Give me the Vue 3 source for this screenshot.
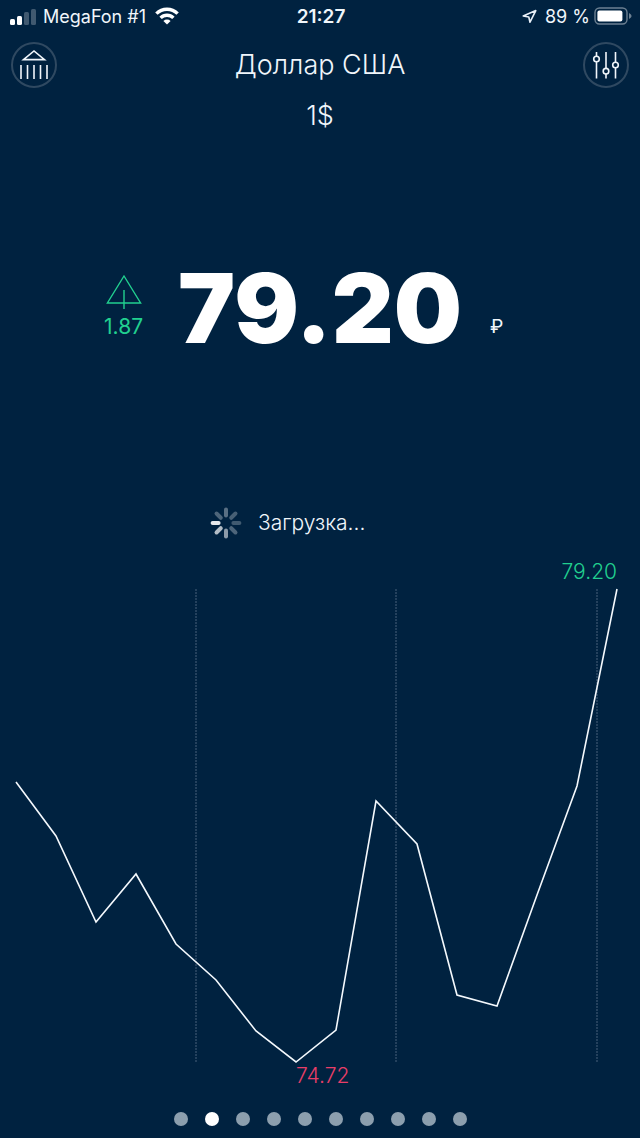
<script setup>
import { ref, computed } from 'vue'

const rate = '79.20'
const change = '1.87'

const pages = 10
const activePage = ref(1)

// Chart values in plot units, one point per day
const points = [
  [16, 227], [56, 281], [96, 367], [136, 319],
  [176, 389], [216, 425], [256, 476], [296, 507],
  [336, 475], [376, 246], [417, 289], [457, 440],
  [497, 451], [537, 340], [577, 231], [617, 34]
]
const gridLines = [196, 396, 597]

const linePoints = computed(() => points.map((p) => p.join(',')).join(' '))

// Spinner spokes, clockwise from the top
const spokes = [0.35, 0.28, 0.25, 0.3, 0.55, 0.7, 0.9, 0.3]
</script>

<template>
  <div class="app">
    <div class="status-bar">
      <div class="status-left">
        <svg class="signal" width="27" height="18" viewBox="0 0 27 18" fill="#fff">
          <rect x="0" y="12" width="5" height="6" rx="1.5" />
          <rect x="7" y="9" width="5" height="9" rx="1.5" />
          <rect x="14" y="5" width="5" height="13" rx="1.5" opacity="0.25" />
          <rect x="21" y="2" width="5" height="16" rx="1.5" opacity="0.25" />
        </svg>
        <span class="carrier">MegaFon #1</span>
        <svg class="wifi" width="24" height="18" viewBox="0 0 24 18" fill="none" stroke="#fff" stroke-width="3.4">
          <path d="M1.4 6.6 A15 15 0 0 1 22.6 6.6" />
          <path d="M5.6 10.9 A9 9 0 0 1 18.4 10.9" />
          <path d="M12 17.6 L8.4 14 A5.2 5.2 0 0 1 15.6 14 Z" fill="#fff" stroke="none" />
        </svg>
      </div>
      <div class="status-time">21:27</div>
      <div class="status-right">
        <svg width="15" height="15" viewBox="0 0 15 15" fill="none" stroke="#e8f0f8" stroke-width="1.6" stroke-linejoin="round">
          <path d="M13.8 1.6 L1.2 7 L6.8 8 L8 13.2 Z" />
        </svg>
        <span class="percent">89 %</span>
        <svg width="38" height="18" viewBox="0 0 38 18">
          <rect x="1" y="1" width="32" height="16" rx="4.5" fill="none" stroke="#6c8092" stroke-width="1.4" />
          <rect x="3.4" y="3.4" width="25" height="11.2" rx="2" fill="#fff" />
          <path d="M35 6 Q37.6 7.4 37.6 9 Q37.6 10.6 35 12 Z" fill="#6c8092" />
        </svg>
      </div>
    </div>

    <header class="header">
      <button class="round-btn" type="button" aria-label="Банк">
        <svg width="30" height="32" viewBox="0 0 30 32" fill="none" stroke="#f0f6fb" stroke-width="1.6">
          <path d="M4.5 10.6 L15 2 L25.5 10.6 Z" />
          <path d="M2 16 V30 M8.5 16 V30 M15 16 V30 M21.5 16 V30 M28 16 V30" />
        </svg>
      </button>
      <h1 class="title">Доллар США</h1>
      <button class="round-btn" type="button" aria-label="Настройки">
        <svg width="28" height="28" viewBox="0 0 28 28" fill="none" stroke="#f0f6fb" stroke-width="1.6">
          <path d="M4.5 1 V5.2 M4.5 10.8 V27.5 M14 1 V17.4 M14 23 V27.5 M23.5 1 V11.2 M23.5 16.8 V27.5" />
          <circle cx="4.5" cy="8" r="2.8" />
          <circle cx="14" cy="20.2" r="2.8" />
          <circle cx="23.5" cy="14" r="2.8" />
        </svg>
      </button>
    </header>
    <p class="unit">1$</p>

    <main class="content">
      <section class="rate">
        <div class="trend">
          <svg width="36" height="36" viewBox="0 0 36 36" fill="none" stroke="#21d08f" stroke-width="1.4">
            <path d="M18 2 L34.6 29 H1.4 Z M18 16 V35" />
          </svg>
          <span>{{ change }}</span>
        </div>
        <div class="value">{{ rate }}</div>
        <div class="currency">₽</div>
      </section>

      <div class="loading" role="status">
        <svg width="32" height="32" viewBox="0 0 32 32" stroke="#fff" stroke-width="4" stroke-linecap="round">
          <line
            v-for="(o, i) in spokes"
            :key="i"
            x1="16"
            y1="2.6"
            x2="16"
            y2="8.6"
            :opacity="o"
            :transform="`rotate(${i * 45} 16 16)`"
          />
        </svg>
        <span>Загрузка...</span>
      </div>

      <svg class="chart" viewBox="0 0 640 534">
        <line
          v-for="x in gridLines"
          :key="x"
          class="grid-line"
          :x1="x"
          :x2="x"
          y1="34"
          y2="507"
        />
        <polyline class="line" :points="linePoints" />
        <text class="label max" x="617" y="24">79.20</text>
        <text class="label min" x="296" y="528">74.72</text>
      </svg>
    </main>

    <nav class="pager">
      <button
        v-for="n in pages"
        :key="n"
        type="button"
        class="dot"
        :class="{ active: n - 1 === activePage }"
        :aria-label="`Страница ${n}`"
        @click="activePage = n - 1"
      ></button>
    </nav>
  </div>
</template>

<style>
body {
  background: #002240;
}
</style>

<style scoped>
.app {
  display: flex;
  flex-direction: column;
  min-height: 100vh;
  box-sizing: border-box;
  background: #002240;
  color: #f0f6fb;
  font-family: Inter, "Liberation Sans", sans-serif;
}

.status-bar {
  display: grid;
  grid-template-columns: 1fr auto 1fr;
  align-items: center;
  height: 32px;
  padding: 0 8px 0 10px;
  font-size: 18px;
}

.status-left,
.status-right {
  display: flex;
  align-items: center;
}

.status-left {
  gap: 6px;
}

.carrier {
  padding-right: 3px;
}

.status-right {
  justify-content: flex-end;
  gap: 4px;
}

.percent {
  padding-left: 4px;
}

.status-time {
  font-size: 19px;
  font-weight: 600;
}

.header {
  display: flex;
  align-items: center;
  justify-content: space-between;
  padding: 10px 11px 0;
}

.round-btn {
  display: flex;
  align-items: center;
  justify-content: center;
  width: 46px;
  height: 46px;
  padding: 0;
  border: 2px solid #2f4961;
  border-radius: 50%;
  background: none;
  cursor: pointer;
}

.title {
  margin: 0;
  font-size: 27px;
  line-height: 34px;
  font-weight: 300;
}

.unit {
  margin: 12px 0 0;
  font-size: 27px;
  line-height: 32px;
  font-weight: 300;
  text-align: center;
}

.rate {
  display: grid;
  grid-template-columns: 1fr auto 1fr;
  align-items: end;
  margin-top: 127px;
}

.trend {
  justify-self: end;
  display: flex;
  flex-direction: column;
  align-items: center;
  gap: 3px;
  padding: 0 35px 16px 0;
  color: #21d08f;
  font-size: 21px;
  line-height: 28px;
}

.value {
  color: #fff;
  font-size: 96px;
  line-height: 98px;
  font-weight: 900;
}

.currency {
  padding: 0 0 16px 28px;
  font-size: 19px;
  line-height: 28px;
}

.loading {
  display: flex;
  align-items: center;
  gap: 16px;
  margin: 150px 0 0 210px;
  font-size: 21px;
  line-height: 32px;
  font-weight: 300;
}

.chart {
  display: block;
  width: 100%;
  margin-top: 16px;
}

.grid-line {
  stroke: #48607a;
  stroke-width: 1;
  stroke-dasharray: 2 1;
}

.line {
  fill: none;
  stroke: #f4f9fd;
  stroke-width: 1.6;
}

.label {
  font-size: 21px;
  font-weight: 300;
}

.max {
  fill: #21d08f;
  text-anchor: end;
}

.min {
  fill: #e83e68;
}

.pager {
  display: flex;
  justify-content: center;
  gap: 17px;
  margin-top: auto;
  padding: 12px 0;
}

.dot {
  width: 14px;
  height: 14px;
  padding: 0;
  border: none;
  border-radius: 50%;
  background: #8c9fae;
  cursor: pointer;
}

.dot.active {
  background: #fff;
}
</style>
